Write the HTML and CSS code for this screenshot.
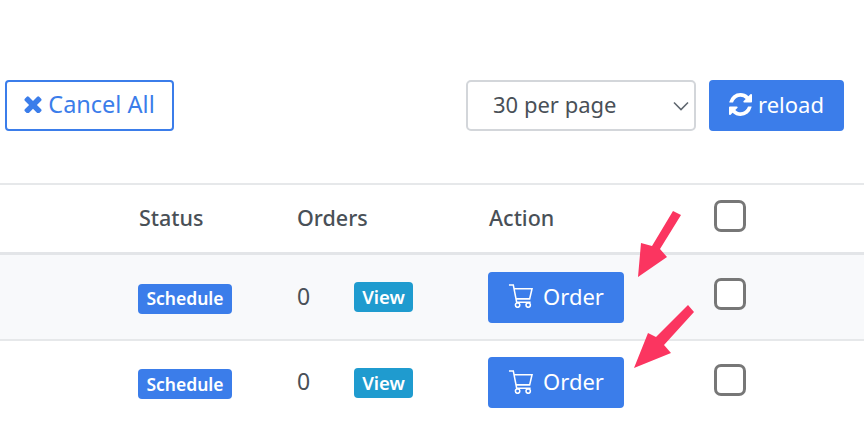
FILE: index.html
```html
<!DOCTYPE html>
<html lang="en">
<head>
<meta charset="utf-8">
<title>Orders</title>
<link rel="stylesheet" href="styles.css">
</head>
<body>
<main class="page">
  <section class="toolbar">
    <button class="btn btn-outline" type="button">
      <svg class="icon-x" viewBox="272 272 1248 1248" aria-hidden="true"><path d="M1490 1322q0 40-28 68l-136 136q-28 28-68 28t-68-28l-294-294-294 294q-28 28-68 28t-68-28l-136-136q-28-28-28-68t28-68l294-294-294-294q-28-28-28-68t28-68l136-136q28-28 68-28t68 28l294 294 294-294q28-28 68-28t68 28l136 136q28 28 28 68t-28 68l-294 294 294 294q28 28 28 68z"/></svg>
      Cancel All
    </button>
    <div class="toolbar-right">
      <select class="per-page"><option>30 per page</option></select>
      <button class="btn btn-primary btn-reload" type="button">
        <svg class="icon-reload" viewBox="128 128 1536 1536" aria-hidden="true"><path d="M1639 1056q0 5-1 7-64 268-268 434.500t-478 166.500q-146 0-282.500-55t-243.500-157l-129 129q-19 19-45 19t-45-19-19-45v-448q0-26 19-45t45-19h448q26 0 45 19t19 45-19 45l-137 137q71 66 161 102t187 36q134 0 250-65t186-179q11-17 53-117 8-23 30-23h192q13 0 22.500 9.500t9.500 22.500zm25-800v448q0 26-19 45t-45 19h-448q-26 0-45-19t-19-45 19-45l138-138q-148-137-349-137-134 0-250 65t-186 179q-11 17-53 117-8 23-30 23h-199q-13 0-22.500-9.500t-9.500-22.500v-7q65-268 270-434.500t480-166.500q146 0 284 55.500t245 156.500l130-129q19-19 45-19t45 19 19 45z"/></svg>
        reload
      </button>
    </div>
  </section>

  <section class="table">
    <div class="row row-head">
      <div class="head-label">Status</div>
      <div class="head-label">Orders</div>
      <div class="head-label">Action</div>
      <div><input class="check" type="checkbox" aria-label="Select all"></div>
    </div>

    <div class="row row-striped">
      <div><span class="badge">Schedule</span></div>
      <div class="cell-orders"><span class="count">0</span><a class="view">View</a></div>
      <div>
        <button class="btn btn-primary btn-order" type="button">
          <svg class="icon-cart" viewBox="0 0 26 26" aria-hidden="true"><path d="M1 2h4.500l3.500 18h14.500M6.500 6H25l-2.500 10.500H8"/><circle cx="10" cy="23" r="2.300"/><circle cx="21" cy="23" r="2.300"/></svg>
          Order
        </button>
      </div>
      <div><input class="check" type="checkbox" aria-label="Select row"></div>
    </div>

    <div class="row row-last">
      <div><span class="badge">Schedule</span></div>
      <div class="cell-orders"><span class="count">0</span><a class="view">View</a></div>
      <div>
        <button class="btn btn-primary btn-order" type="button">
          <svg class="icon-cart" viewBox="0 0 26 26" aria-hidden="true"><path d="M1 2h4.500l3.500 18h14.500M6.500 6H25l-2.500 10.500H8"/><circle cx="10" cy="23" r="2.300"/><circle cx="21" cy="23" r="2.300"/></svg>
          Order
        </button>
      </div>
      <div><input class="check" type="checkbox" aria-label="Select row"></div>
    </div>
  </section>

  <svg class="arrows" viewBox="0 0 864 439" aria-hidden="true">
    <polygon points="673,211 681,215 660,249 667,257 638,277 641,243 652,246"/>
    <polygon points="688,305 694,312 664,345 671,353 634,368 648,333 656,337"/>
  </svg>
</main>
</body>
</html>
```
FILE: styles.css
```css
* { box-sizing: border-box; }

html, body {
  margin: 0;
  height: 439px;
  overflow: hidden;
  background: #fff;
}

body {
  font-family: "Noto Sans", "Open Sans", sans-serif;
  font-size: 22px;
  color: #495057;
}

.page {
  position: relative;
  width: 864px;
  height: 439px;
}

.toolbar {
  display: flex;
  justify-content: space-between;
  padding: 80px 20px 0 5px;
  margin-bottom: 52px;
}

.toolbar-right {
  display: flex;
  gap: 13px;
}

.btn {
  display: inline-flex;
  align-items: center;
  justify-content: center;
  height: 51px;
  border-radius: 4px;
  border: 2px solid #3b7dea;
  font: inherit;
  padding: 0 0 3px;
}

.btn-outline {
  width: 169px;
  background: #fff;
  color: #3b7dea;
  font-size: 23.500px;
  gap: 6px;
}

.btn-primary {
  background: #3b7dea;
  color: #fff;
}

.btn-reload {
  width: 135px;
  gap: 6px;
}

.btn-order {
  width: 136px;
  gap: 10px;
}

.icon-x {
  width: 18px;
  height: 18px;
  fill: #3b7dea;
}

.icon-reload {
  width: 23px;
  height: 23px;
  fill: #fff;
}

.icon-cart {
  width: 25px;
  height: 25px;
  fill: none;
  stroke: #fff;
  stroke-width: 1.6;
}

.per-page {
  appearance: none;
  width: 230px;
  height: 51px;
  border: 2px solid #d3d6da;
  border-radius: 5px;
  padding: 0 0 3px 25px;
  font: inherit;
  color: #495057;
  background: #fff url("data:image/svg+xml,%3Csvg xmlns='http://www.w3.org/2000/svg' width='16' height='10'%3E%3Cpath d='M1 1.500l7 7 7-7' fill='none' stroke='%23606870' stroke-width='1.600'/%3E%3C/svg%3E") no-repeat right 5px center;
}

.table {
  border-top: 2px solid #e6e8ea;
}

.row {
  display: grid;
  grid-template-columns: 158px 192px 226px 1fr;
  align-items: center;
  padding-left: 138px;
}

.row-head {
  height: 70px;
  border-bottom: 3px solid #e3e5e8;
}

.row-striped {
  height: 86px;
  background: #f8f9fb;
  border-bottom: 2px solid #e6e8ea;
}

.row-last {
  height: 83px;
}

.head-label {
  padding: 0 0 2px 1px;
  font-size: 21.500px;
  font-weight: 500;
}

.cell-orders {
  display: flex;
  align-items: center;
  justify-content: space-between;
  width: 117px;
}

.count {
  padding: 0 0 3px 1px;
  font-size: 23px;
}

.badge {
  display: inline-flex;
  align-items: center;
  justify-content: center;
  width: 94px;
  height: 30px;
  margin: 3px 0 0;
  padding-bottom: 1px;
  border-radius: 4px;
  background: #3b7dea;
  color: #fff;
  font-size: 17.500px;
  font-weight: 600;
}

.view {
  display: inline-flex;
  align-items: center;
  justify-content: center;
  width: 59px;
  height: 30px;
  padding-bottom: 1px;
  border-radius: 4px;
  background: #1f9bcf;
  color: #fff;
  font-size: 18.500px;
  font-weight: 600;
}

.check {
  appearance: none;
  display: block;
  width: 32px;
  height: 32px;
  margin: 0 0 6px;
  border: 3px solid #777;
  border-radius: 7px;
  background: #fff;
}

.arrows {
  position: absolute;
  inset: 0;
  width: 864px;
  height: 439px;
  fill: #fb3560;
  pointer-events: none;
}
```
